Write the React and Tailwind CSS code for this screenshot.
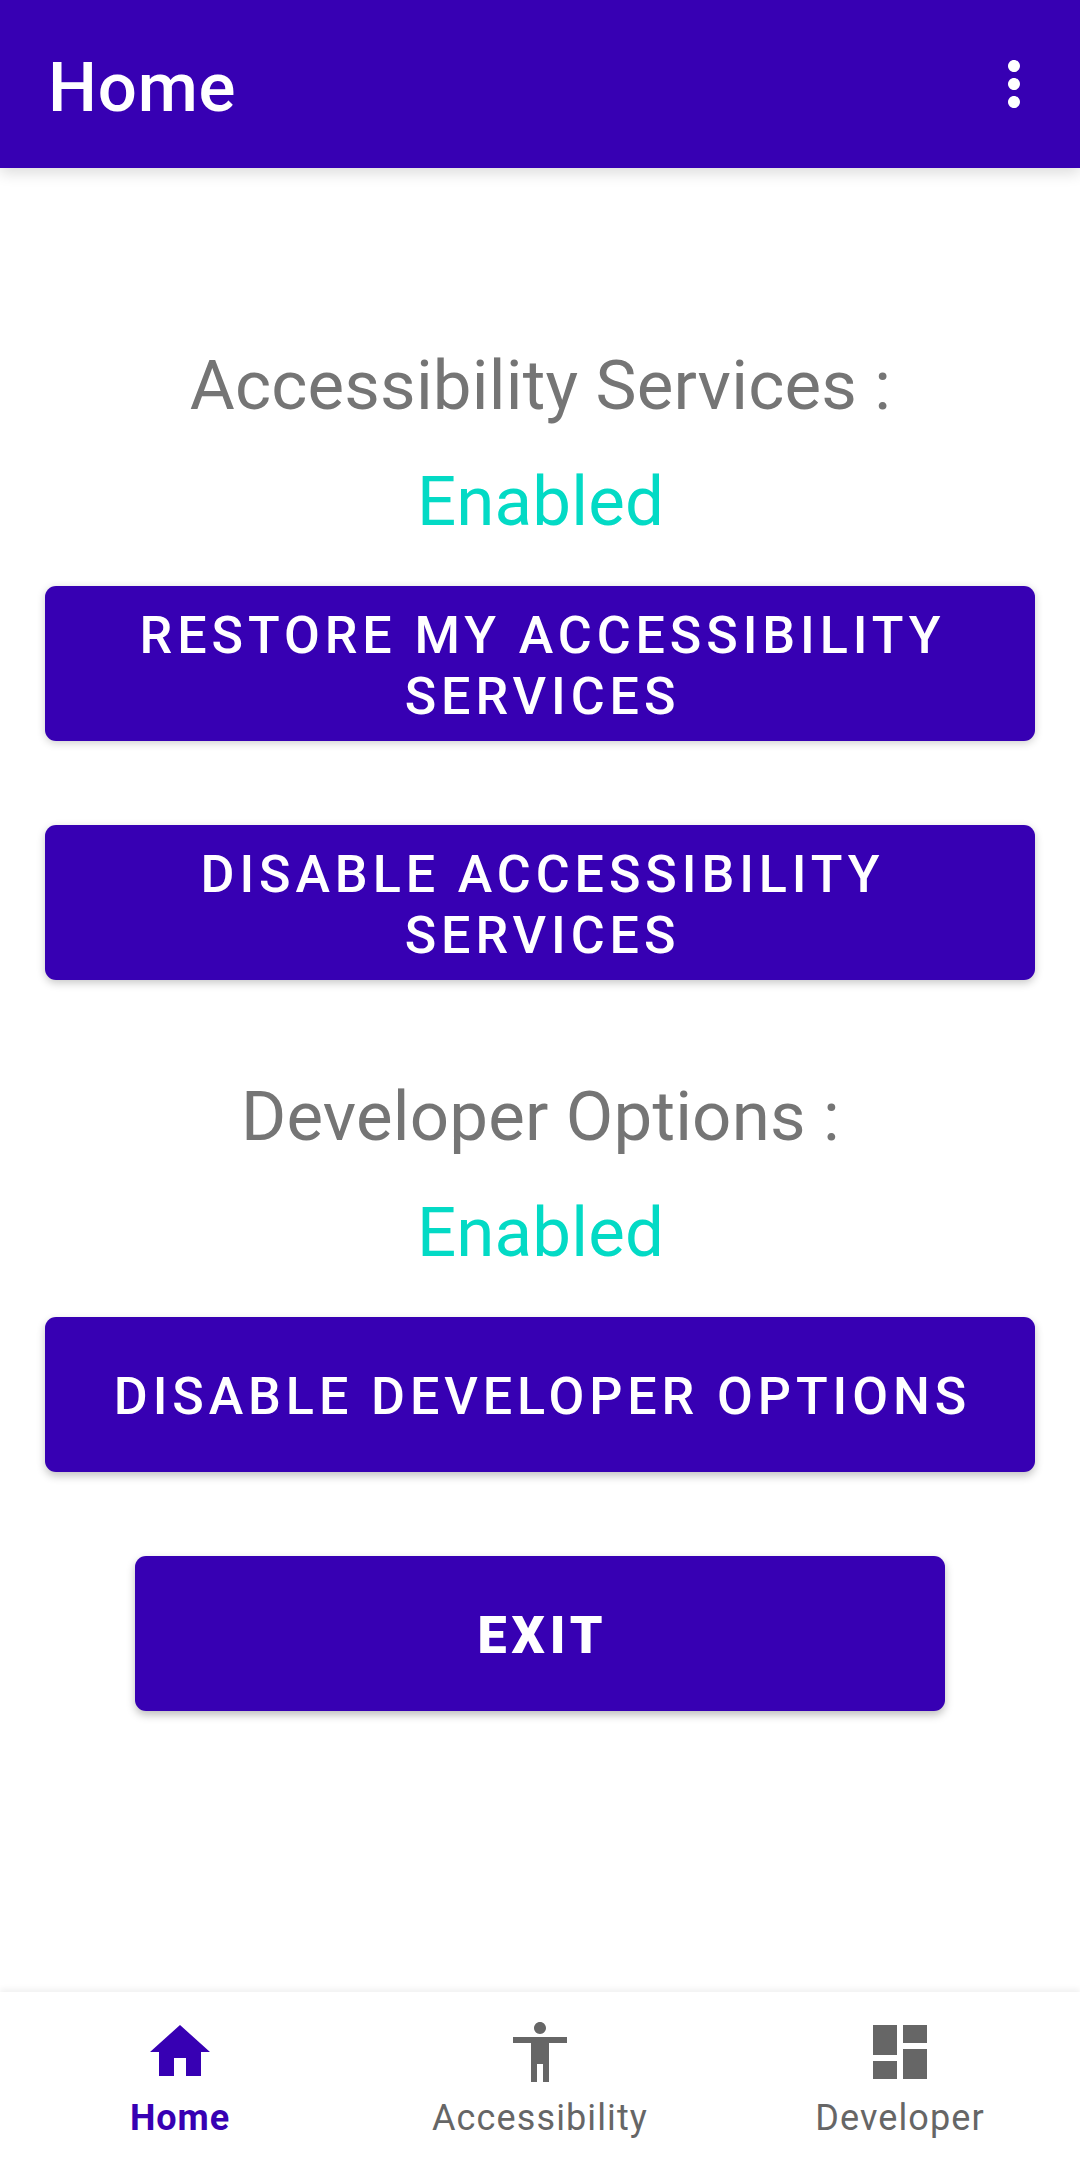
import React from 'react';
import { MdHome, MdAccessibility, MdDashboard, MdMoreVert } from 'react-icons/md';

const StatusGroup = ({ title, status }) => (
    <div className="pl-px text-center text-[69px] font-normal leading-[81px] tracking-[0.18px]">
        <p className="text-[#757575]">{title}</p>
        <p className="mt-[35px] text-[#03dac5]">{status}</p>
    </div>
);

const ActionButton = ({ children, className = '' }) => (
    <button className={`flex h-[155px] items-center justify-center rounded-[11px] bg-[#3700b3] pl-[5px] pt-1 text-center text-[52px] leading-[61px] tracking-[4.93px] text-white ${className}`}>
        {children}
    </button>
);

const NavItem = ({ icon: Icon, label, active }) => (
    <a className={`flex flex-1 flex-col items-center pt-6 ${active ? 'text-[#3700b3]' : 'text-[#666666]'}`}>
        <Icon className="size-[72px]" />
        <span className={`mt-[9px] text-[36px] leading-[42px] ${active ? 'font-bold tracking-[0.9px]' : 'font-normal tracking-[1.12px]'}`}>{label}</span>
    </a>
);

const App = () => (
    <div className="flex h-[2160px] w-[1080px] flex-col bg-white font-['Roboto',sans-serif]">
        <header className="flex h-[168px] items-center justify-between bg-[#3700b3] pl-[48px] pr-[30px] text-white shadow-[0_5px_14px_rgba(0,0,0,0.14)]">
            <h1 className="pt-[7px] text-[69px] font-medium leading-[81px] tracking-[0.8px]">Home</h1>
            <MdMoreVert className="size-[72px]" />
        </header>

        <main className="flex flex-1 flex-col px-[45px] pt-[177px]">
            <StatusGroup title="Accessibility Services :" status="Enabled" />
            <ActionButton className="mt-11 font-medium shadow-[0_2px_8px_rgba(0,0,0,0.2)]">RESTORE MY ACCESSIBILITY<br />SERVICES</ActionButton>
            <ActionButton className="mt-[84px] mb-[96px] font-medium shadow-[0_3px_8px_rgba(0,0,0,0.22)]">DISABLE ACCESSIBILITY<br />SERVICES</ActionButton>
            <StatusGroup title="Developer Options :" status="Enabled" />
            <ActionButton className="mt-11 font-medium shadow-[0_4px_8px_rgba(0,0,0,0.24)]">DISABLE DEVELOPER OPTIONS</ActionButton>
            <ActionButton className="mx-[90px] mt-[84px] font-black shadow-[0_4px_8px_rgba(0,0,0,0.26)]">EXIT</ActionButton>
        </main>

        <nav className="flex h-[168px] bg-white shadow-[0_-3px_6px_rgba(0,0,0,0.06)]">
            <NavItem icon={MdHome} label="Home" active />
            <NavItem icon={MdAccessibility} label="Accessibility" />
            <NavItem icon={MdDashboard} label="Developer" />
        </nav>
    </div>
);

export default App;
